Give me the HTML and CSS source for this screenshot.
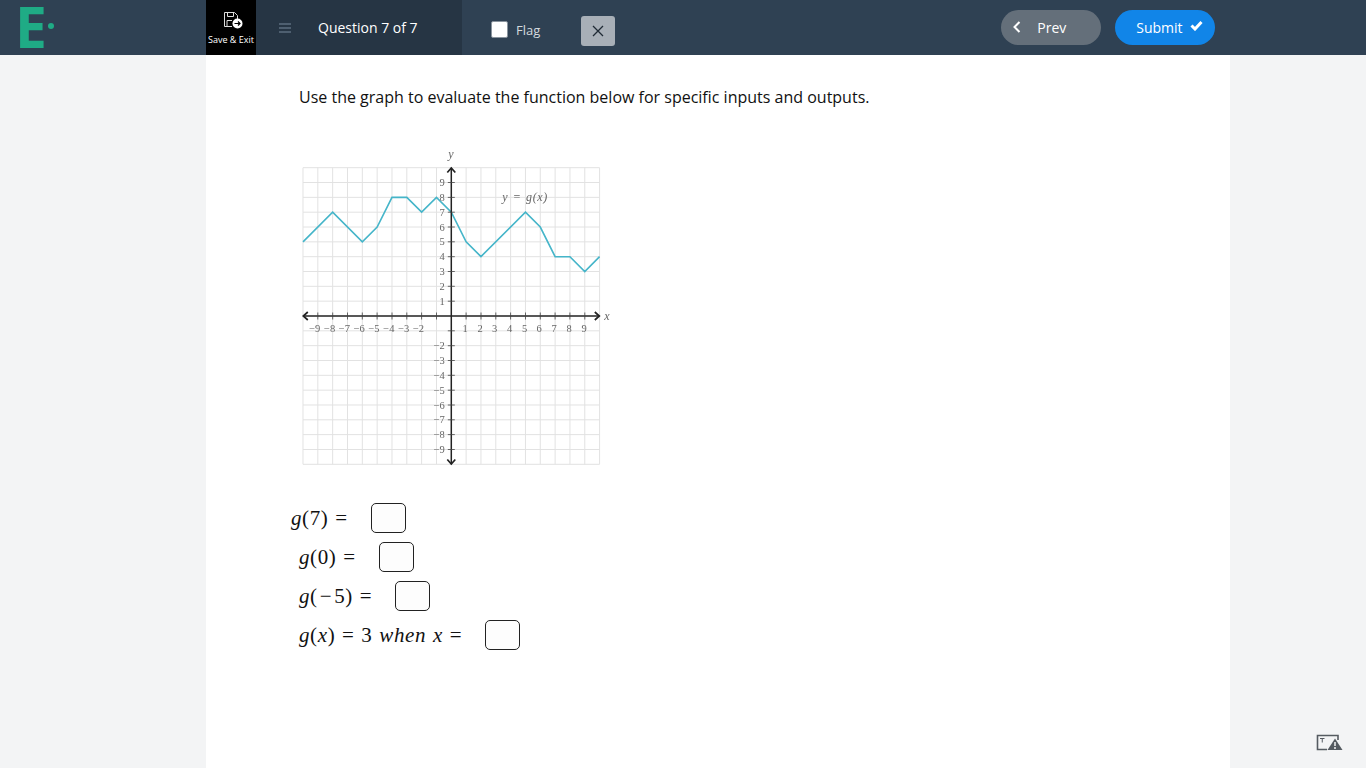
FILE: index.html
```html
<!DOCTYPE html>
<html lang="en">
<head>
  <meta charset="UTF-8">
  <title>Question 7 of 7</title>
  <link rel="stylesheet" href="styles.css">
</head>
<body>

<header class="topbar">
  <div class="logo">
    <svg width="60" height="55" viewBox="0 0 60 55">
      <text class="logo-e" x="15" y="48">E</text>
      <circle cx="51" cy="26" r="3" fill="#1fab85"/>
    </svg>
  </div>

  <a class="save-exit">
    <svg class="save-icon" width="20" height="18" viewBox="0 0 20 18">
      <path d="M9 15.500H1.500V1.500H11.500L14.500 4.500V8" fill="none" stroke="#ddd" stroke-width="1"/>
      <path d="M4.500 1.500V5.500H10.500V1.500M4 15V9.500H9" fill="none" stroke="#ddd" stroke-width="1"/>
      <circle cx="14.500" cy="12.500" r="5" fill="#fff"/>
      <path d="M11.500 12.500H17M15 10.500L17 12.500L15 14.500" fill="none" stroke="#000" stroke-width="1.200"/>
    </svg>
    <span>Save &amp; Exit</span>
  </a>

  <div class="question-nav">
    <svg class="menu-icon" width="12" height="10" viewBox="0 0 12 10">
      <path d="M0 1H12M0 5H12M0 9H12" stroke="#5c6e7f" stroke-width="1.500"/>
    </svg>
    <span class="question-label">Question 7 of 7</span>
  </div>

  <div class="flag-box">
    <span class="flag-check"></span>
    <span class="flag-label">Flag</span>
    <button class="close-btn">
      <svg width="12" height="12" viewBox="0 0 12 12">
        <path d="M1 1L11 11M11 1L1 11" stroke="#1f2a35" stroke-width="1.300"/>
      </svg>
    </button>
  </div>

  <div class="nav-buttons">
    <button class="pill pill-prev">
      <svg width="8" height="12" viewBox="0 0 8 12">
        <path d="M6.500 1L1.500 6L6.500 11" fill="none" stroke="#fff" stroke-width="2"/>
      </svg>
      <span>Prev</span>
    </button>
    <button class="pill pill-submit">
      <span>Submit</span>
      <svg width="13" height="11" viewBox="0 0 13 11">
        <path d="M1.500 5.500L5 9L11.500 2" fill="none" stroke="#fff" stroke-width="3"/>
      </svg>
    </button>
  </div>
</header>

<main class="sheet">
  <p class="prompt">Use the graph to evaluate the function below for specific inputs and outputs.</p>

  <svg class="graph" width="325" height="325" viewBox="-156.300 -171 325 325">
    <g transform="scale(14.83 -14.83)">
      <path class="grid" d="M-10 -10V10M-9 -10V10M-8 -10V10M-7 -10V10M-6 -10V10M-5 -10V10M-4 -10V10M-3 -10V10M-2 -10V10M-1 -10V10M1 -10V10M2 -10V10M3 -10V10M4 -10V10M5 -10V10M6 -10V10M7 -10V10M8 -10V10M9 -10V10M10 -10V10"/>
      <path class="grid" d="M-10 -10H10M-10 -9H10M-10 -8H10M-10 -7H10M-10 -6H10M-10 -5H10M-10 -4H10M-10 -3H10M-10 -2H10M-10 -1H10M-10 1H10M-10 2H10M-10 3H10M-10 4H10M-10 5H10M-10 6H10M-10 7H10M-10 8H10M-10 9H10M-10 10H10"/>
      <polyline class="curve" points="-10,5 -8,7 -6,5 -5,6 -4,8 -3,8 -2,7 -1,8 0,7 1,5 2,4 5,7 6,6 7,4 8,4 9,3 10,4"/>
    </g>

    <path class="axis" d="M-148.300 0H148.300M0 -148.300V148.300"/>
    <path class="arrow" d="M-143.500 -4L-148 0L-143.500 4M143.500 -4L148 0L143.500 4M-4 -143.500L0 -148L4 -143.500M-4 143.500L0 148L4 143.500"/>
    <path class="tick" d="M-133.500 -3.500V3.500M-118.600 -3.500V3.500M-103.800 -3.500V3.500M-89 -3.500V3.500M-74.200 -3.500V3.500M-59.300 -3.500V3.500M-44.500 -3.500V3.500M-29.700 -3.500V3.500M-14.800 -3.500V3.500M14.800 -3.500V3.500M29.700 -3.500V3.500M44.500 -3.500V3.500M59.300 -3.500V3.500M74.200 -3.500V3.500M89 -3.500V3.500M103.800 -3.500V3.500M118.600 -3.500V3.500M133.500 -3.500V3.500"/>
    <path class="tick" d="M-3.500 -133.500H3.500M-3.500 -118.600H3.500M-3.500 -103.800H3.500M-3.500 -89H3.500M-3.500 -74.200H3.500M-3.500 -59.300H3.500M-3.500 -44.500H3.500M-3.500 -29.700H3.500M-3.500 -14.800H3.500M-3.500 14.800H3.500M-3.500 29.700H3.500M-3.500 44.500H3.500M-3.500 59.300H3.500M-3.500 74.200H3.500M-3.500 89H3.500M-3.500 103.800H3.500M-3.500 118.600H3.500M-3.500 133.500H3.500"/>

    <g class="labels labels-x">
      <text x="-131" y="16">−9</text>
      <text x="-116.100" y="16">−8</text>
      <text x="-101.300" y="16">−7</text>
      <text x="-86.500" y="16">−6</text>
      <text x="-71.700" y="16">−5</text>
      <text x="-56.800" y="16">−4</text>
      <text x="-42" y="16">−3</text>
      <text x="-27.200" y="16">−2</text>
      <text x="16.500" y="16">1</text>
      <text x="31.500" y="16">2</text>
      <text x="46" y="16">3</text>
      <text x="61" y="16">4</text>
      <text x="76" y="16">5</text>
      <text x="90.500" y="16">6</text>
      <text x="105.500" y="16">7</text>
      <text x="120.500" y="16">8</text>
      <text x="135.500" y="16">9</text>
    </g>
    <g class="labels labels-y">
      <text x="-6.500" y="-130">9</text>
      <text x="-6.500" y="-115.200">8</text>
      <text x="-6.500" y="-100.300">7</text>
      <text x="-6.500" y="-85.500">6</text>
      <text x="-6.500" y="-70.700">5</text>
      <text x="-6.500" y="-55.800">4</text>
      <text x="-6.500" y="-41">3</text>
      <text x="-6.500" y="-26.200">2</text>
      <text x="-6.500" y="-11.300">1</text>
      <text x="-6.500" y="33.200">−2</text>
      <text x="-6.500" y="48">−3</text>
      <text x="-6.500" y="62.800">−4</text>
      <text x="-6.500" y="77.700">−5</text>
      <text x="-6.500" y="92.500">−6</text>
      <text x="-6.500" y="107.300">−7</text>
      <text x="-6.500" y="122.100">−8</text>
      <text x="-6.500" y="137">−9</text>
    </g>
    <g class="labels labels-var">
      <text x="-3" y="-158">y</text>
      <text x="153" y="3.500">x</text>
      <text class="graph-name" x="51" y="-115">y = g(x)</text>
    </g>
  </svg>

  <div class="answers">
    <div class="answer first"><span class="math"><i>g</i>(7) =</span><span class="blank"></span></div>
    <div class="answer"><span class="math"><i>g</i>(0) =</span><span class="blank"></span></div>
    <div class="answer"><span class="math"><i>g</i>(<span class="minus">−</span>5) =</span><span class="blank"></span></div>
    <div class="answer"><span class="math"><i>g</i>(<i>x</i>) = 3 <i>when x</i> =</span><span class="blank"></span></div>
  </div>
</main>

<!-- Report a problem -->
<svg class="report-icon" width="28" height="17" viewBox="0 0 28 17">
  <path d="M23 6V1.500H2.500V15.500H12" fill="none" stroke="#555b61" stroke-width="1.600"/>
  <path d="M5 4.500H9.500M7.250 4.500V8.500" fill="none" stroke="#555b61" stroke-width="1"/>
  <path d="M20 4.500L27.500 16H12.500Z" fill="#555b61"/>
  <path d="M20 8V12M20 13V15" stroke="#fff" stroke-width="1.400"/>
</svg>

</body>
</html>
```

FILE: styles.css
```css
html, body {
  height: 100%;
}
body {
  font-family: 'Open Sans', sans-serif;
  background: #f3f4f5;
  margin: 0;
  overflow: hidden;
}
button {
  font-family: inherit;
  border: none;
  cursor: pointer;
}

/* Top bar */
.topbar {
  display: flex;
  height: 55px;
  background: #2f4153;
  color: #fff;
}
.logo {
  width: 206px;
}
.logo svg {
  display: block;
}
.logo-e {
  font-size: 57px;
  font-weight: 700;
  fill: #1fab85;
}
.save-exit {
  width: 50px;
  background: #000;
  display: flex;
  flex-direction: column;
  align-items: center;
  padding-top: 11px;
  box-sizing: border-box;
  font-size: 9px;
  line-height: 12px;
  white-space: nowrap;
}
.save-icon {
  margin: 0 0 5px 4px;
}
.question-nav {
  width: 206px;
  background: #263544;
  display: flex;
  align-items: center;
  padding-left: 23px;
  box-sizing: border-box;
}
.question-label {
  margin: -1px 0 0 27px;
  font-size: 14px;
}
.flag-box {
  display: flex;
  align-items: center;
  padding: 6px 0 0 29px;
  box-sizing: border-box;
}
.flag-check {
  width: 15px;
  height: 15px;
  background: #fff;
  border: 1px solid #8a949e;
  border-radius: 2px;
  margin-top: -3px;
}
.flag-label {
  margin: -2px 0 0 8px;
  font-size: 13px;
  color: #d5dade;
}
.close-btn {
  width: 34px;
  height: 30px;
  margin-left: 41px;
  padding: 0;
  background: #a8afb7;
  border-radius: 3px;
  display: flex;
  align-items: center;
  justify-content: center;
}
.nav-buttons {
  margin-left: 386px;
  display: flex;
  align-items: center;
  gap: 14px;
  padding-bottom: 1px;
}
.pill {
  width: 100px;
  height: 35px;
  border-radius: 18px;
  color: #fff;
  font-size: 14px;
  display: flex;
  align-items: center;
  padding: 0;
}
.pill-prev {
  background: #646f7a;
  padding-left: 12px;
}
.pill-prev span {
  margin-left: 16px;
}
.pill-submit {
  background: #1185e8;
  padding-left: 21px;
}
.pill-submit svg {
  margin-left: 7px;
  margin-top: -3px;
}

/* Question sheet */
.sheet {
  width: 1024px;
  height: 713px;
  margin-left: 206px;
  background: #fff;
  padding: 31px 0 0 93px;
  box-sizing: border-box;
}
.prompt {
  margin: 0;
  font-size: 16px;
  line-height: 22px;
  color: #111;
}
.graph {
  display: block;
  margin: 37px 0 0 -4px;
  filter: blur(0.4px);
}
.grid {
  fill: none;
  stroke: #e2e2e2;
  stroke-width: 1;
  vector-effect: non-scaling-stroke;
}
.curve {
  fill: none;
  stroke: #45b5c9;
  stroke-width: 1.600;
  vector-effect: non-scaling-stroke;
}
.axis {
  stroke: #222;
  stroke-width: 1.500;
}
.arrow {
  fill: none;
  stroke: #222;
  stroke-width: 1.700;
}
.tick {
  stroke: #444;
  stroke-width: 0.800;
}
.labels {
  font-family: 'Liberation Serif', serif;
  font-size: 10.500px;
  fill: #666;
}
.labels-x text {
  text-anchor: end;
}
.labels-y text {
  text-anchor: end;
}
.labels-var {
  font-style: italic;
  font-size: 12px;
}
.graph-name {
  letter-spacing: 0.6px;
  word-spacing: 1px;
}

/* Answers */
.answers {
  margin-top: 33px;
  display: flex;
  flex-direction: column;
  gap: 9px;
}
.answer {
  display: flex;
  align-items: center;
  height: 30px;
}
.answer.first {
  margin-left: -8px;
}
.math {
  font-family: 'Liberation Serif', serif;
  font-size: 21px;
  letter-spacing: 0.6px;
  word-spacing: 1px;
  color: #111;
  white-space: nowrap;
}
.minus {
  margin: 0 2px;
}
.blank {
  width: 35px;
  height: 30px;
  margin-left: 23px;
  box-sizing: border-box;
  background: #fdfdfd;
  border: 1px solid #222;
  border-radius: 5px;
}

/* Sits over the page corner */
.report-icon {
  position: fixed;
  left: 1315px;
  top: 734px;
}
```
